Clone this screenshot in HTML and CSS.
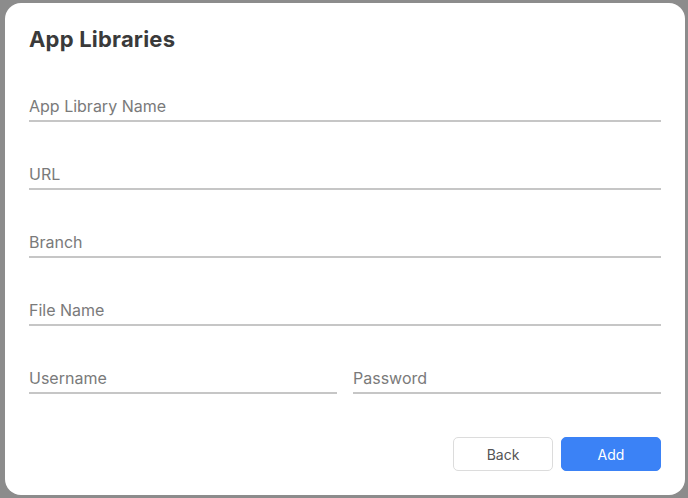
FILE: index.html
```html
<!DOCTYPE html>
<html>
<head>
<meta charset="utf-8">
<link rel="stylesheet" href="styles.css">
</head>
<body>
<div class="dialog">
  <h1 class="title">App Libraries</h1>
  <div class="fields">
    <div class="field"><span class="label">App Library Name</span></div>
    <div class="field"><span class="label">URL</span></div>
    <div class="field"><span class="label">Branch</span></div>
    <div class="field"><span class="label">File Name</span></div>
    <div class="row">
      <div class="field"><span class="label">Username</span></div>
      <div class="field"><span class="label">Password</span></div>
    </div>
  </div>
  <div class="actions">
    <button class="btn btn-back">Back</button>
    <button class="btn btn-add">Add</button>
  </div>
</div>
</body>
</html>
```
FILE: styles.css
```css
html, body {
  margin: 0;
  padding: 0;
}
body {
  background: #8c8c8c;
  width: 688px;
  height: 498px;
  overflow: hidden;
  font-family: Inter, "Noto Sans", sans-serif;
}
.dialog {
  box-sizing: border-box;
  margin: 3px 3px 3px 5px;
  width: 680px;
  height: 492px;
  background: #fff;
  border-radius: 16px;
  padding: 24px;
  display: flex;
  flex-direction: column;
}
.title {
  margin: 0;
  font-size: 22px;
  line-height: 24px;
  font-weight: 700;
  letter-spacing: 0.2px;
  color: #3a3a3a;
}
.fields {
  margin-top: 3px;
  display: flex;
  flex-direction: column;
}
.field {
  padding-top: 42px;
  padding-bottom: 4px;
  border-bottom: 2px solid #c6c6c6;
  flex: 1;
}
.label {
  display: block;
  font-size: 16px;
  line-height: 20px;
  color: #7a7a7a;
}
.row {
  display: flex;
  gap: 16px;
}
.actions {
  margin-top: auto;
  display: flex;
  justify-content: flex-end;
  gap: 8px;
}
.btn {
  width: 100px;
  height: 34px;
  border-radius: 5px;
  font-family: Inter, "Noto Sans", sans-serif;
  font-size: 14px;
  cursor: pointer;
}
.btn-back {
  background: #fff;
  border: 1px solid #dcdcdc;
  color: #555;
}
.btn-add {
  background: #3b82f6;
  border: 1px solid #3b82f6;
  color: #fff;
}
```
